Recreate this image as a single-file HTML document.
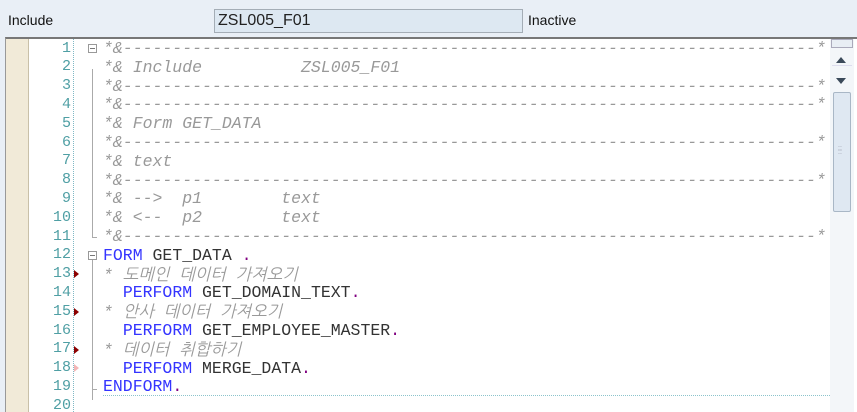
<!DOCTYPE html>
<html><head><meta charset="utf-8"><style>
body{margin:0;width:857px;height:410px;overflow:hidden;background:#e9eff6;font-family:"Liberation Sans",sans-serif;position:relative}
.lbl{position:absolute;font-size:14px;color:#111}
#inp{position:absolute;left:214px;top:9px;background:#dde8f2;border:1px solid #a4adb6;font-size:16px;line-height:22px;padding-left:3px;box-sizing:border-box;width:309px;height:24px;color:#222}
#ed{position:absolute;left:5px;top:37px;width:852px;height:373px;background:#fff;border-top:2px solid #777;border-left:1px solid #999;overflow:hidden}
#yel{position:absolute;left:0;top:0;width:22px;height:373px;background:#f1ead8;border-right:1px solid #c9c0a8}
#dots{position:absolute;left:67px;top:0;height:373px;border-left:1px dotted #7fb8c4}
.ln{position:absolute;left:23px;width:42px;text-align:right;font-family:"Liberation Mono",monospace;font-size:15px;color:#4f9fa4}
.c{position:absolute;left:97px;white-space:pre;font-family:"Liberation Mono","NanumGothic",monospace;font-size:16.5px;color:#333}
.cm{color:#999;font-style:italic}
.k{color:#3434ff}.p{color:#800080}
.fb{position:absolute;left:82px;width:7px;height:7px;border:1px solid #999;background:#fff}
.fb:after{content:"";position:absolute;left:1px;top:3px;width:5px;height:1px;background:#777}
.tri{position:absolute;left:68px;width:0;height:0;border-top:4px solid transparent;border-bottom:4px solid transparent;border-left:5px solid #8b0000}
#sb{position:absolute;left:824px;top:0;width:24px;height:373px;background:#f3f6f9;z-index:5}
</style></head><body>
<div class="lbl" style="left:8px;top:12px">Include</div>
<div id="inp">ZSL005_F01</div>
<div class="lbl" style="left:528px;top:12px">Inactive</div>
<div id="ed">
<div id="yel"></div><div id="dots"></div>
<div style="position:absolute;left:86px;top:30px;width:1px;height:168px;background:#aaa"></div>
<div style="position:absolute;left:86px;top:198px;width:5px;height:1px;background:#aaa"></div>
<div style="position:absolute;left:86px;top:218px;width:1px;height:143px;background:#aaa"></div>
<div style="position:absolute;left:86px;top:350px;width:5px;height:1px;background:#aaa"></div>
<div class="fb" style="left:82px;top:5px"></div>
<div class="fb" style="left:82px;top:212px"></div>
<div class="tri" style="top:231px"></div>
<div class="tri" style="top:269px"></div>
<div class="tri" style="top:307px"></div>
<div class="tri" style="top:325px;border-left-color:#f4b6b6"></div>
<div style="position:absolute;left:97px;top:356px;width:727px;border-top:1px dotted #8cc4cc"></div>
<div id="sb">
<div style="position:absolute;left:1px;top:0;width:20px;height:7px;background:#e8eef4;border:1px solid #aab"></div>
<div style="position:absolute;left:6px;top:18px;border-left:5px solid transparent;border-right:5px solid transparent;border-bottom:6px solid #3b4a5a"></div>
<div style="position:absolute;left:6px;top:39px;border-left:5px solid transparent;border-right:5px solid transparent;border-top:6px solid #3b4a5a"></div>
<div style="position:absolute;left:2px;top:26px;width:20px;border-top:1px solid #dde"></div>
<div style="position:absolute;left:3px;top:53px;width:16px;height:118px;background:#dfe8f2;border:1px solid #a9b7c6;border-radius:2px"></div>
<div style="position:absolute;left:8px;top:108px;font-size:7px;color:#99a;line-height:4px">::<br>::</div>
</div>
</div>
<script>
var D='*&'+'-'.repeat(70)+'*';
var L=[
['cm',D],
['cm','*& Include          ZSL005_F01'],
['cm',D],['cm',D],
['cm','*& Form GET_DATA'],
['cm',D],
['cm','*& text'],
['cm',D],
['cm','*& -->  p1        text'],
['cm','*& <--  p2        text'],
['cm',D],
['h','<span class="k">FORM</span> GET_DATA <span class="p">.</span>'],
['cm','* 도메인 데이터 가져오기'],
['h','  <span class="k">PERFORM</span> GET_DOMAIN_TEXT<span class="p">.</span>'],
['cm','* 안사 데이터 가져오기'],
['h','  <span class="k">PERFORM</span> GET_EMPLOYEE_MASTER<span class="p">.</span>'],
['cm','* 데이터 취합하기'],
['h','  <span class="k">PERFORM</span> MERGE_DATA<span class="p">.</span>'],
['h','<span class="k">ENDFORM</span><span class="p">.</span>'],
['h','']];
var ed=document.getElementById('ed'),s='';
for(var i=0;i<20;i++){
s+='<div class="ln" style="top:'+(i*18.8+0.5).toFixed(1)+'px">'+(i+1)+'</div>';
var x=L[i][0]=='cm'?'<span class="cm">'+L[i][1].replace(/&/g,'&amp;').replace(/</g,'&lt;')+'</span>':L[i][1];
s+='<div class="c" style="top:'+(i*18.8).toFixed(1)+'px">'+x+'</div>';}
ed.insertAdjacentHTML('beforeend',s);
</script>
</body></html>
